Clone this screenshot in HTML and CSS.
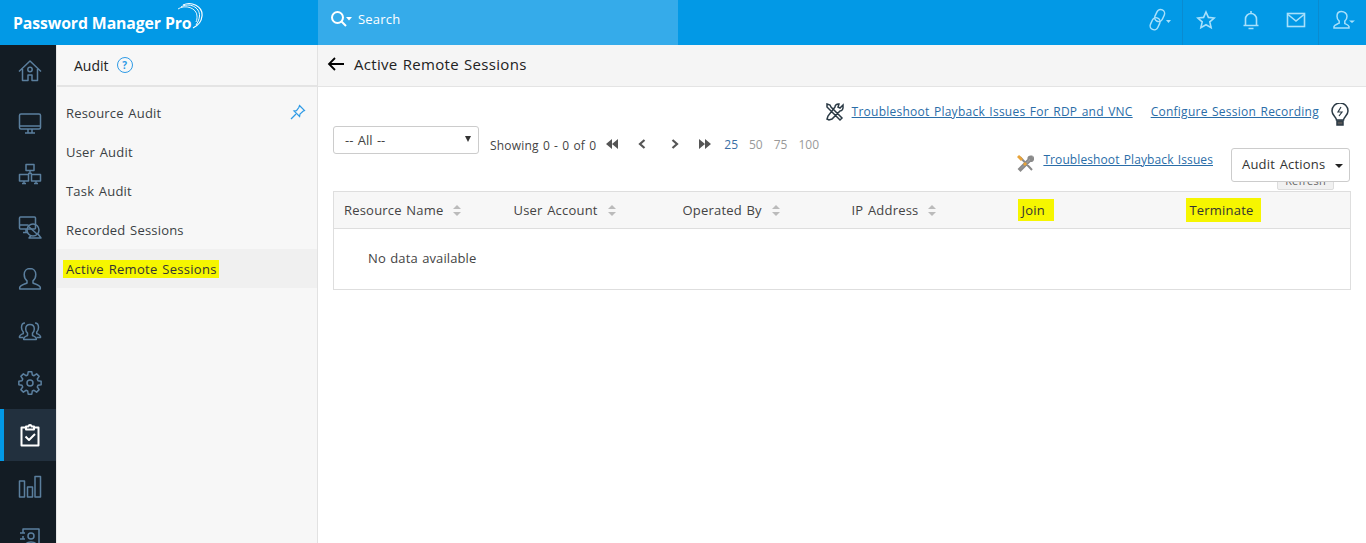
FILE: index.html
```html
<!DOCTYPE html>
<html lang="en">
<head>
<meta charset="utf-8">
<title>Password Manager Pro</title>
<link rel="stylesheet" href="styles.css">
</head>
<body>
<header class="topbar">
  <div class="logo"><span class="logo-text">Password Manager Pro</span>
    <svg class="logo-arc" width="30" height="30" viewBox="0 0 30 30" fill="none" stroke="#fff"><path d="M8 3C16-1 28 4 27 14 26.500 20 22 24 18 26" stroke-width="1.200"/><path d="M6 5C14 0 25 5 24.500 14 24 18 23 20 21 23" stroke-width="1"/><path d="M3 7C10 2 22 6 22 14 22 16 22 18 21 20" stroke-width=".9"/></svg>
  </div>
  <div class="search">
    <svg width="22" height="18" viewBox="0 0 22 18" fill="none" stroke="#fff" stroke-width="2"><circle cx="7.500" cy="7.500" r="5.500"/><path d="M11.500 11.500L16 16"/><path d="M16 7h6l-3 3.500z" fill="#fff" stroke="none"/></svg>
    <span>Search</span>
  </div>
  <div class="top-icons">
    <div class="ti ti-link"><svg width="24" height="24" viewBox="0 0 24 24" fill="none" stroke="#a8e0fb" stroke-width="1.500"><rect x="7.500" y="1.500" width="8" height="12.500" rx="4" transform="rotate(25 12 8)"/><rect x="3" y="9.500" width="8" height="12.500" rx="4" transform="rotate(25 7 16)"/><path d="M18 12h5l-2.500 3z" fill="#a8e0fb" stroke="none"/></svg></div>
    <div class="ti-group">
      <div class="ti"><svg width="20" height="20" viewBox="0 0 20 20" fill="none" stroke="#a8e0fb" stroke-width="1.600"><path d="M10 2l2.400 5.400 5.800.6-4.400 3.900 1.300 5.800L10 14.700l-5.100 3 1.300-5.800L1.800 8l5.800-.6z"/></svg></div>
      <div class="ti"><svg width="18" height="20" viewBox="0 0 18 20" fill="none" stroke="#a8e0fb" stroke-width="1.600"><path d="M3.500 15V9a5.500 5.500 0 0 1 11 0v6M1.500 15.500h15M6.500 18.500h5M9 1v2.500"/></svg></div>
      <div class="ti"><svg width="20" height="16" viewBox="0 0 20 16" fill="none" stroke="#a8e0fb" stroke-width="1.600"><rect x="1.500" y="1.500" width="17" height="13"/><path d="M2 2.500l8 6.500 8-6.500"/></svg></div>
    </div>
    <div class="ti ti-user"><svg width="22" height="20" viewBox="0 0 22 20" fill="none" stroke="#a8e0fb" stroke-width="1.500"><path d="M8.500 1.500c-2.800 0-4.500 2-4.500 4.700 0 2.300 1 4 2.200 5v2c-1.800 1-4.700 1.500-5.200 3.300v1.500h15v-1.500c-.4-1.500-2.500-2.300-4.200-3v-2.300c1.200-1 2.200-2.700 2.200-5 0-2.700-2.700-4.700-5.500-4.700z"/><path d="M16 10.500h6l-3 2.500z" fill="#a8e0fb" stroke="none"/></svg></div>
  </div>
</header>
<div class="shell">
  <nav class="rail">
    <div class="rail-item"><svg width="24" height="24" viewBox="0 0 24 24"><path d="M1 12.500L12 2l11 10.500M4.500 10v11.500h5.500V16h4v5.500h5.500V10"/><circle cx="12" cy="10.500" r="2.200"/></svg></div>
    <div class="rail-item"><svg width="24" height="24" viewBox="0 0 24 24"><rect x="1.500" y="3" width="21" height="15" rx="1.500"/><path d="M1.500 15h21M7 22h10M10 18v4M14 18v4"/></svg></div>
    <div class="rail-item"><svg width="24" height="24" viewBox="0 0 24 24"><rect x="8" y="1.500" width="8" height="6"/><path d="M12 7.500v3M10 10.500h4"/><rect x="1.500" y="11.500" width="9" height="6.500"/><rect x="13.500" y="11.500" width="9" height="6.500"/><path d="M4 20.500h4M16 20.500h4M6 18v2.500M18 18v2.500"/></svg></div>
    <div class="rail-item"><svg width="24" height="24" viewBox="0 0 24 24"><rect x="1.500" y="2" width="16" height="12" rx="1"/><path d="M1.500 10h9M5 17.500h5M8 14v3.500"/><circle cx="15" cy="15" r="6"/><path d="M10 11l9 8M13 20.500l-2 2.500h12l-3-4"/></svg></div>
    <div class="rail-item"><svg width="24" height="24" viewBox="0 0 24 24"><path d="M12 1.500c-3.600 0-5.800 2.700-5.800 6 0 2.800 1.200 5 2.800 6.300v2.200c-2.400 1.300-6.800 2-7.300 4.500v1.500h20.600V20.500c-.5-2.500-4.900-3.200-7.300-4.500v-2.200c1.600-1.300 2.800-3.500 2.800-6.300 0-3.300-2.200-6-5.800-6z"/></svg></div>
    <div class="rail-item"><svg width="24" height="24" viewBox="0 0 24 24"><path d="M7 4C4.500 4 3.500 6 3.500 8.500c0 2 .8 3.500 1.800 4.500v1.500c-1.500.8-3.300 1.300-3.800 3v1h4"/><path d="M17 4c2.500 0 3.500 2 3.500 4.500 0 2-.8 3.500-1.800 4.500v1.500c1.500.8 3.300 1.300 3.800 3v1h-4"/><path d="M12 5.500c-2.800 0-4.300 2-4.300 4.500 0 2 .8 3.200 1.800 4v2.500c-1.500.8-3.300 1.300-3.800 3v1h12.600v-1c-.5-1.700-2.300-2.200-3.800-3V14c1-.8 1.800-2 1.800-4 0-2.500-1.500-4.500-4.300-4.500z"/></svg></div>
    <div class="rail-item"><svg width="24" height="24" viewBox="0 0 24 24"><circle cx="12" cy="12" r="3"/><path d="M9.700 4l.5-3.150h3.600l.5 3.150 1.730.72 2.580-1.870 2.540 2.540-1.870 2.580.72 1.730 3.150.5v3.600l-3.150.5-.72 1.730 1.870 2.580-2.540 2.540-2.580-1.870-1.730.72-.5 3.150h-3.600l-.5-3.150-1.730-.72-2.580 1.870-2.540-2.540 1.870-2.580L4 14.300l-3.150-.5v-3.600L4 9.700l.72-1.730-1.870-2.580 2.540-2.540 2.580 1.870z"/></svg></div>
    <div class="rail-item rail-active"><svg width="24" height="24" viewBox="0 0 24 24"><path d="M8 4.500H3.500v18h17v-18H16"/><path d="M8 6.500V3.500h2.500a1.500 1.500 0 0 1 3 0H16v3z"/><path d="M7.500 13.500l3.500 3.500 6-6"/></svg></div>
    <div class="rail-item"><svg width="24" height="24" viewBox="0 0 24 24"><rect x="1.500" y="6" width="5" height="16"/><rect x="9.500" y="12" width="5" height="10"/><rect x="17" y="1.500" width="5.500" height="20.500"/></svg></div>
    <div class="rail-item"><svg width="24" height="24" viewBox="0 0 24 24"><path d="M5 6V2h16v20H5v-4M5 9v3M2 6h5M2 12h5"/><circle cx="13" cy="9" r="3"/><path d="M7 19c.5-3 3-4 6-4s5.500 1 6 4"/></svg></div>
  </nav>
  <aside class="subnav">
    <div class="subnav-head"><span>Audit</span><span class="help">?</span></div>
    <ul class="subnav-list">
      <li class="sub-item">Resource Audit
        <svg class="pin" width="16" height="16" viewBox="0 0 16 16" fill="none" stroke="#2f9be6" stroke-width="1.200"><path d="M9.500 1.500l5 5-1.500.7-3 2.800-.4 2.500L4 7l2.500-.4 2.300-3.100z"/><path d="M6 10l-5 5"/></svg>
      </li>
      <li class="sub-item">User Audit</li>
      <li class="sub-item">Task Audit</li>
      <li class="sub-item">Recorded Sessions</li>
      <li class="sub-item sub-current"><span class="hl hl-nav">Active Remote Sessions</span></li>
    </ul>
  </aside>
  <main class="content">
    <div class="title-bar">
      <svg width="18" height="14" viewBox="0 0 18 14" fill="none" stroke="#000" stroke-width="1.800"><path d="M17 7H2M8 1L2 7l6 6"/></svg>
      <h1>Active Remote Sessions</h1>
    </div>
    <div class="panel">
      <div class="link-row">
        <svg class="tool" width="20" height="20" viewBox="0 0 20 20" fill="none" stroke="#2b3a45" stroke-width="1.500"><path d="M2 2l3 1 1 2 11 11-2 2L4 7 2 5zM18 3l-3 3-2-1 1-3c-2-.5-4 1-4 3L3 14l-1 3 2 1 3-1 8-8c2 0 3.500-2 3-5z"/></svg>
        <a class="lnk">Troubleshoot Playback Issues For RDP and VNC</a>
        <a class="lnk lnk-cfg">Configure Session Recording</a>
        <svg class="bulb" width="20" height="24" viewBox="0 0 20 24" fill="none" stroke="#2b3a45" stroke-width="1.500"><path d="M6.500 17c0-3-4.500-4.500-4.500-9a8 8 0 0 1 16 0c0 4.500-4.500 6-4.500 9z"/><path d="M7 18h6v4H7z" fill="#555"/><path d="M11 4L8 9h4l-3 4" stroke-width="1.200"/></svg>
      </div>
      <div class="tool-row">
        <div class="select"><span>-- All --</span><i class="sel-caret"></i></div>
        <div class="pager">
          <span class="showing">Showing <b>0 - 0 of 0</b></span>
          <span class="pg">
            <svg width="13" height="10" viewBox="0 0 13 10" fill="#555"><path d="M6 0v10L0 5zM12 0v10L6 5z"/></svg>
            <svg class="pg-prev" width="8" height="10" viewBox="0 0 8 10" fill="none" stroke="#555" stroke-width="2.200"><path d="M6.500 1L2 5l4.500 4"/></svg>
            <svg class="pg-next" width="8" height="10" viewBox="0 0 8 10" fill="none" stroke="#555" stroke-width="2.200"><path d="M1.500 1L6 5 1.500 9"/></svg>
            <svg class="pg-last" width="13" height="10" viewBox="0 0 13 10" fill="#555"><path d="M0 0v10l6-5zM6 0v10l6-5z"/></svg>
          </span>
          <span class="sizes"><a class="on">25</a><a>50</a><a>75</a><a>100</a></span>
        </div>
        <div class="tool-right">
          <svg class="tool2" width="17" height="17" viewBox="0 0 17 17" fill="none" stroke-width="2"><path d="M3 2l12 13M14.500 1.500c-2-.5-3.500 1-3 3L2 14l1.500 1.500 9.500-9.500c2 .5 3.500-1 3-3l-2 1.500-1-1z" stroke="#8a8a8a"/><path d="M1 1l4 4" stroke="#e8a33a" stroke-width="3"/><path d="M7 8l2 2" stroke="#e8a33a" stroke-width="3"/></svg>
          <a class="lnk lnk-short">Troubleshoot Playback Issues</a>
          <div class="actions"><span>Audit Actions</span><i class="act-caret"></i><span class="refresh">Refresh</span></div>
        </div>
      </div>
      <table class="grid">
        <thead>
          <tr>
            <th class="c1">Resource Name<i class="sort"></i></th>
            <th class="c2">User Account<i class="sort"></i></th>
            <th class="c3">Operated By<i class="sort"></i></th>
            <th class="c4">IP Address<i class="sort"></i></th>
            <th class="c5"><span class="hl hl-join">Join</span></th>
            <th class="c6"><span class="hl hl-term">Terminate</span></th>
          </tr>
        </thead>
        <tbody>
          <tr><td colspan="6" class="empty">No data available</td></tr>
        </tbody>
      </table>
    </div>
  </main>
</div>
</body>
</html>
```

FILE: styles.css
```css
* { box-sizing: border-box; }
html, body { margin: 0; height: 100%; overflow: hidden; }
body { font-family: "Open Sans", "Noto Sans", "Liberation Sans", sans-serif; font-size: 13px; color: #333; background: #fff; letter-spacing: .2px; word-spacing: 1px; }
ul { list-style: none; margin: 0; padding: 0; }
a { text-decoration: none; }
h1 { margin: 0; font-weight: 400; font-size: 15px; color: #222; letter-spacing: .3px; }

.topbar { height: 45px; display: flex; background: #0299e6; color: #fff; }
.logo { width: 318px; display: flex; align-items: flex-start; padding: 13px 0 0 13px; position: relative; }
.logo-text { font-weight: 700; font-size: 15.800px; letter-spacing: -.1px; word-spacing: 0; line-height: 20px; }
.logo-arc { position: absolute; left: 175px; top: 2px; }
.search { width: 360px; background: #35abea; display: flex; align-items: center; gap: 6px; padding: 0 0 7px 12px; }
.top-icons { flex: 1; display: flex; justify-content: flex-end; margin-right: 1px; }
.ti { display: flex; align-items: center; justify-content: center; height: 45px; width: 45px; padding-bottom: 5px; }
.ti-link { width: 53px; padding-left: 8px; }
.ti-group { display: flex; border-left: 1px solid #0a8bd0; border-right: 1px solid #0a8bd0; }
.ti-user { width: 46px; padding-left: 3px; }

.shell { display: flex; height: 498px; }
.rail { width: 56px; background: #131c24; overflow: hidden; flex: none; }
.rail-item { height: 52px; display: flex; align-items: center; justify-content: center; padding-left: 4px; }
.rail-item svg { fill: none; stroke: #5b7f9e; stroke-width: 1.500; stroke-linejoin: round; }
.rail-active { background: #22303e; border-left: 4px solid #0299e6; padding-left: 0; }
.rail-active svg { stroke: #fff; stroke-width: 2; }

.subnav { width: 262px; background: #f7f7f7; border-left: 1px solid #e6e6e6; border-right: 1px solid #e2e2e2; flex: none; }
.subnav-head { height: 42px; display: flex; align-items: center; gap: 8px; padding-left: 17px; border-bottom: 2px solid #e4e4e4; font-size: 14px; color: #222; letter-spacing: 0; }
.help { width: 16px; height: 16px; border: 1.500px solid #2f9be6; border-radius: 50%; color: #2f9be6; font-size: 10px; font-weight: 700; display: flex; align-items: center; justify-content: center; }
.subnav-list { padding-top: 6px; }
.sub-item { height: 39px; display: flex; align-items: center; justify-content: space-between; padding: 0 11px 0 9px; color: #3a3f44; }
.sub-current { background: #f0f0f0; }
.pin { margin-top: -2px; }
.hl { background: #f6f600; color: #333; }
.hl-nav { padding: 0 2px 0 3px; margin-left: -3px; letter-spacing: .3px; }

.content { flex: 1; display: flex; flex-direction: column; min-width: 0; }
.title-bar { height: 42px; display: flex; align-items: center; gap: 9px; padding: 0 0 3px 9px; background: #f5f5f5; border-bottom: 1px solid #e4e4e4; }
.panel { padding: 0 16px 0 15px; position: relative; }

.link-row { height: 48px; display: flex; align-items: center; justify-content: flex-end; padding: 1px 21px 0 0; }
.lnk { color: #2a6da8; text-decoration: underline; font-size: 12px; letter-spacing: .25px; white-space: nowrap; }
.tool { margin-right: 7px; }
.lnk-cfg { margin-left: 18px; }
.bulb { margin: 6px -21px 0 11px; }

.tool-row { display: flex; height: 56px; align-items: flex-start; }
.select { width: 146px; height: 28px; margin-top: -9px; border: 1px solid #ccc; border-radius: 3px; background: #fff; padding: 0 7px 0 11px; display: flex; align-items: center; justify-content: space-between; color: #444; letter-spacing: 0; }
.sel-caret { width: 0; height: 0; border-left: 3px solid transparent; border-right: 3px solid transparent; border-top: 6px solid #333; margin-top: -2px; }
.pager { display: flex; align-items: center; margin-left: 11px; font-size: 12px; color: #444; height: 20px; margin-top: -1px; }
.showing { margin-top: 3px; white-space: nowrap; word-spacing: .8px; }
.showing b { font-weight: 400; }
.pg { display: flex; align-items: center; margin-left: 10px; }
.pg-prev { margin-left: 19px; }
.pg-next { margin-left: 25px; }
.pg-last { margin-left: 20px; }
.sizes { display: flex; gap: 11px; margin-left: 12px; color: #999; letter-spacing: 0; }
.sizes .on { color: #3a6ea5; }
.tool-right { margin-left: auto; display: flex; align-items: flex-start; }
.tool-right .lnk { margin-top: 16px; }
.lnk-short { letter-spacing: .1px; }
.tool2 { margin: 20px 9px 0 0; }
.actions { width: 119px; height: 34px; margin: 13px 0 0 18px; border: 1px solid #ccc; border-radius: 3px; background: #fff; padding: 0 6px 2px 10px; display: flex; align-items: center; justify-content: space-between; color: #333; position: relative; }
.act-caret { width: 0; height: 0; border-left: 4px solid transparent; border-right: 4px solid transparent; border-top: 4px solid #222; margin-top: 3px; }
.refresh { position: absolute; left: 45px; top: 24px; width: 57px; height: 17px; z-index: -1; background: #f1f1f1; border: 1px solid #ddd; border-radius: 2px; font-size: 11px; text-align: center; line-height: 13px; color: #666; }

.grid { width: 1018px; border-collapse: collapse; table-layout: fixed; border: 1px solid #dedede; }
.grid th { height: 37px; background: #f7f7f7; border-bottom: 1px solid #dedede; font-weight: 400; text-align: left; padding: 0 0 0 10px; color: #444; white-space: nowrap; }
.c1 { width: 170px; } .c2 { width: 169px; } .c3 { width: 169px; } .c4 { width: 168px; } .c5 { width: 168px; } .c6 { width: auto; }
.sort { display: inline-block; width: 8px; height: 11px; margin-left: 10px; vertical-align: -1px; position: relative; }
.sort::before, .sort::after { content: ""; position: absolute; left: 0; width: 0; height: 0; border-left: 4px solid transparent; border-right: 4px solid transparent; }
.sort::before { top: 0; border-bottom: 4px solid #bbb; }
.sort::after { bottom: 0; border-top: 4px solid #bbb; }
.hl-join { padding: 2px 9px 2px 4px; margin-left: -2px; }
.hl-term { padding: 3px 7px 3px 4px; margin-left: -2px; }
.empty { height: 61px; padding: 0 0 2px 34px; color: #444; letter-spacing: .1px; }
```
